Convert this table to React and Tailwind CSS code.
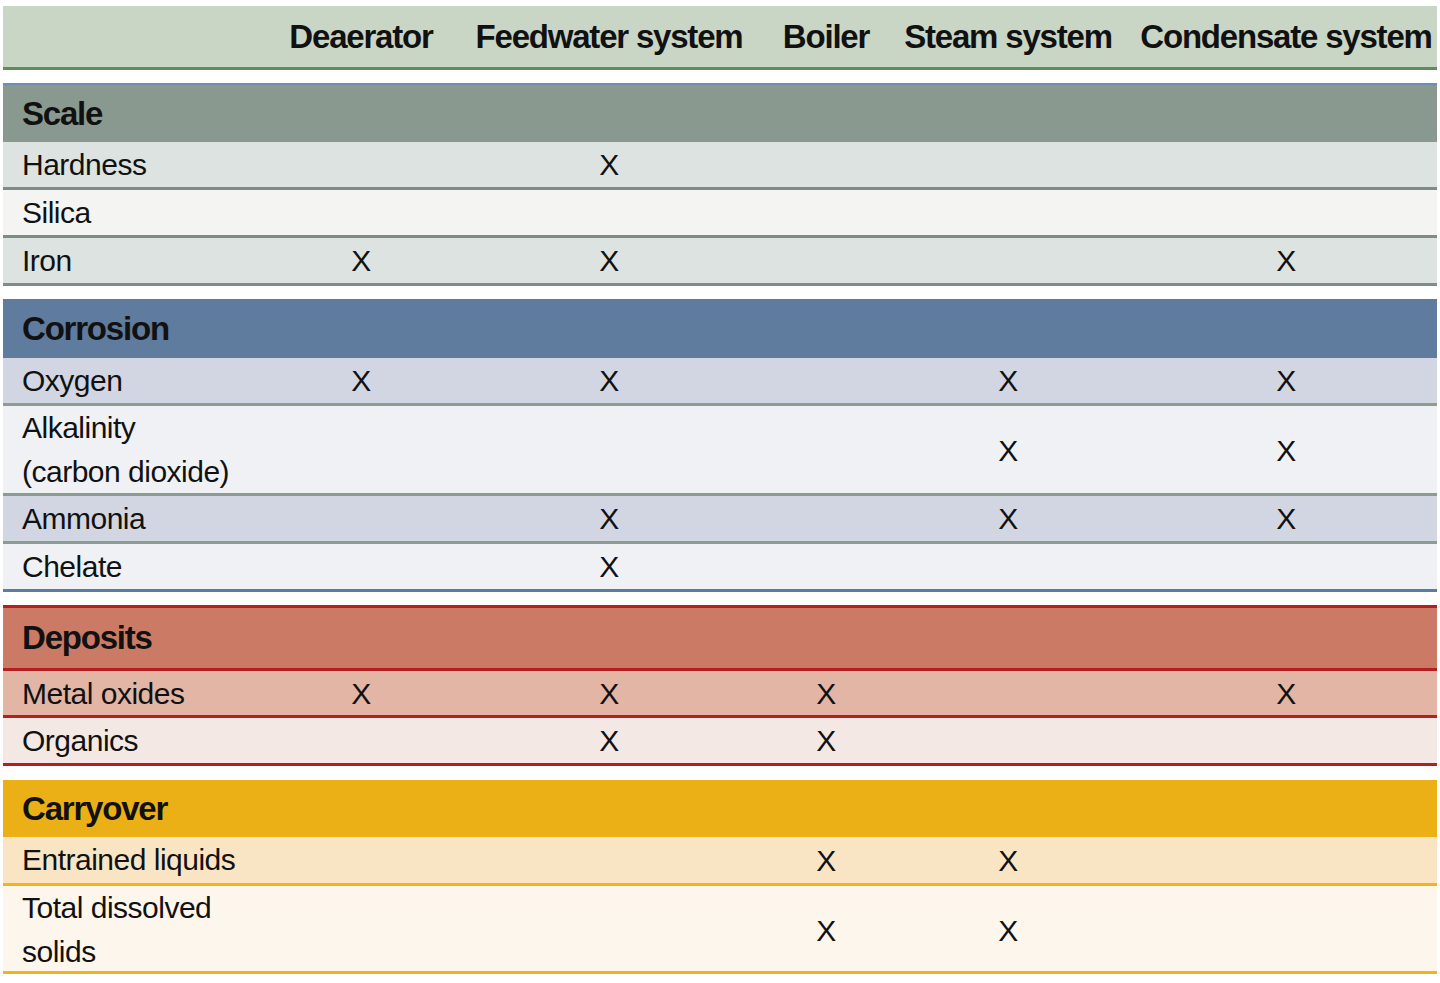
import React from "react";

const COLS = ["Deaerator", "Feedwater system", "Boiler", "Steam system", "Condensate system"];

const GRID = "grid grid-cols-[272px_172px_324px_110px_254px_302px]";

const SECTIONS = [
  {
    title: "Scale",
    wrap: "mt-[13px] border-t-[2px] border-[#6f8db5]",
    head: "h-[57px] bg-[#8a998f]",
    rows: [
      { label: ["Hardness"], marks: [0, 1, 0, 0, 0], cls: "h-[48px] bg-[#dde3e0] border-b-[3px] border-[#7d8c84]" },
      { label: ["Silica"], marks: [0, 0, 0, 0, 0], cls: "h-[48px] bg-[#f4f5f2] border-b-[3px] border-[#7d8c84]" },
      { label: ["Iron"], marks: [1, 1, 0, 0, 1], cls: "h-[48px] bg-[#dde3e0] border-b-[3px] border-[#7d8c84]" },
    ],
  },
  {
    title: "Corrosion",
    wrap: "mt-[13px]",
    head: "h-[59px] bg-[#5f7b9d]",
    rows: [
      { label: ["Oxygen"], marks: [1, 1, 0, 1, 1], cls: "h-[48px] bg-[#d2d6e2] border-b-[3px] border-[#8c9c93]" },
      { label: ["Alkalinity", "(carbon dioxide)"], marks: [0, 0, 0, 1, 1], cls: "h-[90px] bg-[#eff1f5] border-b-[3px] border-[#8c9c93]" },
      { label: ["Ammonia"], marks: [0, 1, 0, 1, 1], cls: "h-[48px] bg-[#d2d6e2] border-b-[3px] border-[#8c9c93]" },
      { label: ["Chelate"], marks: [0, 1, 0, 0, 0], cls: "h-[48px] bg-[#eff1f5] border-b-[3px] border-[#5b7ba6]" },
    ],
  },
  {
    title: "Deposits",
    wrap: "mt-[13px] border-t-[3px] border-[#b51f1f]",
    head: "h-[63px] bg-[#cb7b65] border-b-[3px] border-[#b51f1f]",
    rows: [
      { label: ["Metal oxides"], marks: [1, 1, 1, 0, 1], cls: "h-[47px] bg-[#e3b5a5] border-b-[3px] border-[#b51f1f]" },
      { label: ["Organics"], marks: [0, 1, 1, 0, 0], cls: "h-[48px] bg-[#f4e8e4] border-b-[3px] border-[#b51f1f]" },
    ],
  },
  {
    title: "Carryover",
    wrap: "mt-[14px]",
    head: "h-[57px] bg-[#ebb015]",
    rows: [
      { label: ["Entrained liquids"], marks: [0, 0, 1, 1, 0], cls: "h-[49px] bg-[#f9e5c4] border-b-[3px] border-[#f0b41c]" },
      { label: ["Total dissolved", "solids"], marks: [0, 0, 1, 1, 0], cls: "h-[88px] bg-[#fdf6ec] border-b-[3px] border-[#f0b41c]" },
    ],
  },
];

function Row({ row }) {
  return (
    <div className={`${GRID} items-center ${row.cls}`}>
      <div className="pl-[19px] leading-[44px] whitespace-nowrap">
        {row.label.map((l, i) => (
          <div key={i}>{l}</div>
        ))}
      </div>
      {row.marks.map((m, i) => (
        <div key={i} className="text-center">
          {m ? "X" : ""}
        </div>
      ))}
    </div>
  );
}

export default function App() {
  return (
    <div className="w-[1440px] h-[983px] bg-white pl-[3px] pr-[3px] pt-[6px] text-[#111] font-['Liberation_Sans',Arial,sans-serif] text-[30px] tracking-[-0.5px]">
      <div className={`${GRID} h-[64px] items-center bg-[#c9d6c6] border-b-[3px] border-[#5e8c5c] font-bold text-[33px] tracking-[-1.2px]`}>
        <div />
        {COLS.map((c) => (
          <div key={c} className="text-center whitespace-nowrap">
            {c}
          </div>
        ))}
      </div>
      {SECTIONS.map((s) => (
        <div key={s.title} className={s.wrap}>
          <div className={`flex items-center pl-[19px] font-bold text-[33px] tracking-[-1.2px] ${s.head}`}>
            {s.title}
          </div>
          {s.rows.map((r, i) => (
            <Row key={i} row={r} />
          ))}
        </div>
      ))}
    </div>
  );
}
